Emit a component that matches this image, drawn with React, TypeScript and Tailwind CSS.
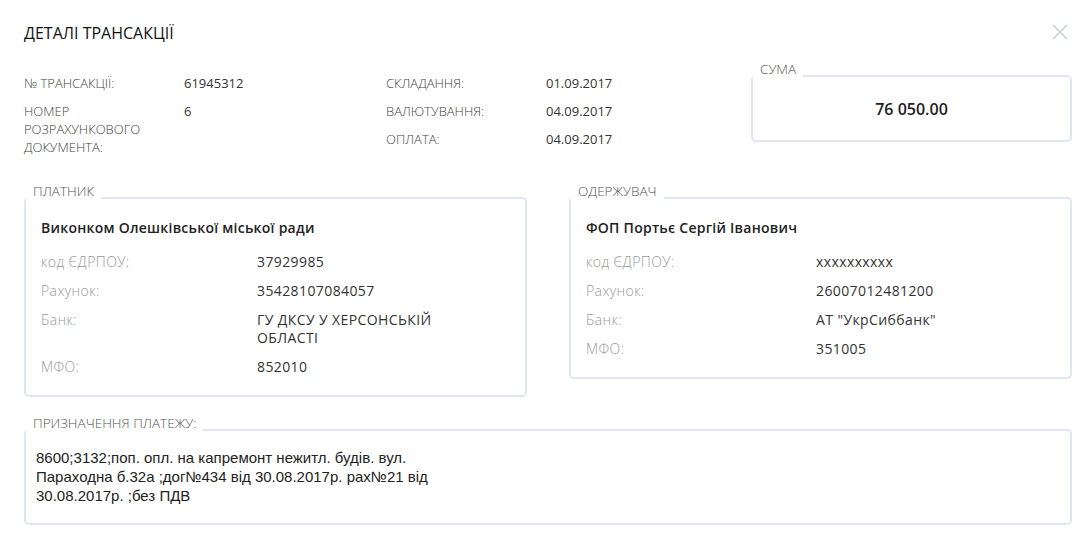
import type { ReactNode } from 'react';

type Row = { label: string; value: string };

const payer = {
  name: 'Виконком Олешківської міської ради',
  rows: [
    { label: 'код ЄДРПОУ:', value: '37929985' },
    { label: 'Рахунок:', value: '35428107084057' },
    { label: 'Банк:', value: 'ГУ ДКСУ У ХЕРСОНСЬКІЙ ОБЛАСТІ' },
    { label: 'МФО:', value: '852010' },
  ],
};

const receiver = {
  name: 'ФОП Портьє Сергій Іванович',
  rows: [
    { label: 'код ЄДРПОУ:', value: 'xxxxxxxxxx' },
    { label: 'Рахунок:', value: '26007012481200' },
    { label: 'Банк:', value: 'АТ "УкрСиббанк"' },
    { label: 'МФО:', value: '351005' },
  ],
};

const purpose =
  '8600;3132;поп. опл. на капремонт нежитл. будів. вул.\nПараходна б.32а ;дог№434 від 30.08.2017р. рах№21 від\n30.08.2017р. ;без ПДВ';

function Box({ title, children, className = '' }: { title: string; children: ReactNode; className?: string }) {
  return (
    <fieldset className={`m-0 min-w-0 rounded-[5px] border-2 border-[#dfe6f2] p-0 ${className}`}>
      <legend className="ml-0 px-[7px] pb-[14px] text-[13.5px] font-light uppercase leading-[14px] text-[#555]">
        {title}
      </legend>
      {children}
    </fieldset>
  );
}

function InfoRow({ label, value }: Row) {
  return (
    <div className="flex text-[13px] leading-[18px]">
      <div className="w-[160px] shrink-0 pr-[32px] font-light uppercase text-[#444]">{label}</div>
      <div className="text-[13px] text-[#333]">{value}</div>
    </div>
  );
}

function PartyCard({ title, name, rows, labelWidth }: { title: string; name: string; rows: Row[]; labelWidth: string }) {
  return (
    <Box title={title}>
      <div className="flex flex-col gap-[11px] px-[15px] pt-[6px] pb-[19px]">
        <div className="mb-[4px] text-[14px] font-semibold leading-[20px] tracking-[0.25px] text-[#222]">{name}</div>
        {rows.map((row) => (
          <div key={row.label} className="flex text-[14px] leading-[18px] tracking-[0.4px]">
            <div className={`${labelWidth} shrink-0 font-light text-[#999]`}>{row.label}</div>
            <div className="w-[210px] text-[#333]">{row.value}</div>
          </div>
        ))}
      </div>
    </Box>
  );
}

export default function App() {
  return (
    <div className="min-h-[534px] bg-white pt-[23px] pr-[13px] pl-[24px] font-['Open_Sans',sans-serif]">
      <div className="flex items-start justify-between">
        <h1 className="text-[16px] leading-[20px] font-normal uppercase text-[#111]">Деталі трансакції</h1>
        <button className="mt-[1px] mr-[4px] text-[#c9cdd4]" aria-label="close">
          <svg width="16" height="16" viewBox="0 0 16 16" fill="none" stroke="currentColor" strokeWidth="1.4">
            <path d="M1 1l14 14M15 1L1 15" />
          </svg>
        </button>
      </div>

      <div className="mt-[19px] flex items-start">
        <div className="mt-[12px] flex w-[362px] flex-col gap-[10px]">
          <InfoRow label="№ трансакції:" value="61945312" />
          <InfoRow label="Номер розрахункового документа:" value="6" />
        </div>
        <div className="mt-[12px] flex w-[365px] flex-col gap-[10px]">
          <InfoRow label="Складання:" value="01.09.2017" />
          <InfoRow label="Валютування:" value="04.09.2017" />
          <InfoRow label="Оплата:" value="04.09.2017" />
        </div>
        <Box title="Сума" className="w-[321px]">
          <div className="pt-[8px] pb-[20px] text-center text-[16px] leading-[22px] font-semibold text-[#222]">76 050.00</div>
        </Box>
      </div>

      <div className="mt-[28px] grid grid-cols-2 items-start gap-[42px]">
        <PartyCard title="Платник" name={payer.name} rows={payer.rows} labelWidth="w-[216px]" />
        <PartyCard title="Одержувач" name={receiver.name} rows={receiver.rows} labelWidth="w-[230px]" />
      </div>

      <Box title="Призначення платежу:" className="mt-[19px]">
        <div className="whitespace-pre-line pt-[4px] pr-[10px] pb-[18px] pl-[10px] font-['Liberation_Sans',Arial,sans-serif] text-[15px] leading-[19px] text-[#222]">
          {purpose}
        </div>
      </Box>
    </div>
  );
}
